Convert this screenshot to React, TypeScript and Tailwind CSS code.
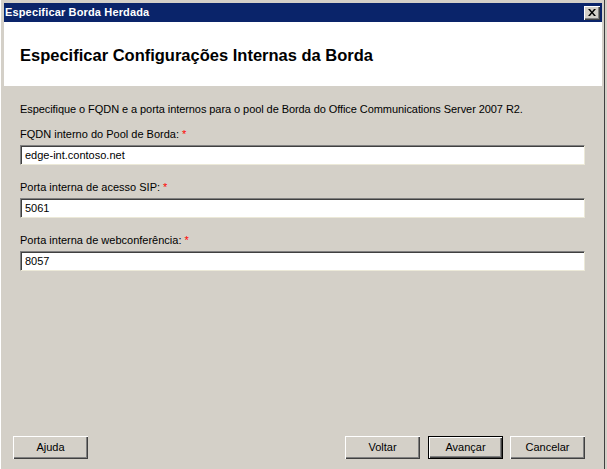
import React from "react";

const font = { fontFamily: '"Liberation Sans", Arial, sans-serif' };

function Field({ label, value }: { label: string; value: string }) {
  return (
    <div className="flex flex-col mt-[16px] first:mt-0">
      <label className="h-[13px] leading-[13px] mb-[4px]">
        {label} <span className="text-[#ff0000]">*</span>
      </label>
      <div className="h-[20px] bg-white border-t border-l border-t-[#808080] border-l-[#808080] border-b border-r border-b-[#ece9d8] border-r-[#ece9d8] shadow-[inset_1px_1px_0_#404040] flex items-center pl-[4px] leading-[13px]">
        {value}
      </div>
    </div>
  );
}

function Btn({ text, isDefault }: { text: string; isDefault?: boolean }) {
  return (
    <button
      className={`w-[75px] h-[23px] bg-[#d4d0c8] text-[11px] text-black flex items-center justify-center ${
        isDefault
          ? "border border-black shadow-[inset_1px_1px_0_#ffffff,inset_-1px_-1px_0_#404040,inset_-2px_-2px_0_#808080]"
          : "shadow-[inset_1px_1px_0_#ffffff,inset_-1px_-1px_0_#404040,inset_-2px_-2px_0_#808080]"
      }`}
    >
      {text}
    </button>
  );
}

export default function App() {
  return (
    <div
      className="w-[607px] h-[469px] bg-[#d4d0c8] text-[11px] text-black overflow-hidden"
      style={font}
    >
      <div className="w-[605px] h-[469px] pl-[3px] pr-[2px] pt-[3px] border-l border-l-white border-r border-r-[#404040] flex flex-col">
        {/* barra de titulo */}
        <div className="h-[19px] bg-[#0a246a] flex items-center justify-between pl-[1px] pr-[2px]">
          <span className="text-white font-bold text-[11px] leading-[19px] tracking-[0.15px]">
            Especificar Borda Herdada
          </span>
          <div className="w-[16px] h-[14px] bg-[#d4d0c8] shadow-[inset_1px_1px_0_#ffffff,inset_-1px_-1px_0_#404040,inset_-2px_-2px_0_#808080] flex items-center justify-center">
            <svg width="8" height="7" viewBox="0 0 8 7">
              <path d="M0 0h2l2 2.5L6 0h2L5 3.5 8 7H6L4 4.5 2 7H0l3-3.5z" fill="#000" />
            </svg>
          </div>
        </div>

        <div className="h-[64px] bg-white flex items-center pl-[16px] pt-[1px]">
          <h1 className="text-[16.5px] font-bold leading-[20px]">
            Especificar Configurações Internas da Borda
          </h1>
        </div>

        <div className="flex-1 flex flex-col pl-[16px] pr-[17px]">
          <p className="mt-[17px] h-[13px] leading-[13px] tracking-[-0.07px]">
            Especifique o FQDN e a porta internos para o pool de Borda do Office Communications Server 2007 R2.
          </p>
          <div className="mt-[12px] flex flex-col">
            <Field label="FQDN interno do Pool de Borda:" value="edge-int.contoso.net" />
            <Field label="Porta interna de acesso SIP:" value="5061" />
            <Field label="Porta interna de webconferência:" value="8057" />
          </div>

          <div className="mt-auto mb-[10px] flex items-center">
            <div className="-ml-[7px]">
              <Btn text="Ajuda" />
            </div>
            <div className="ml-auto flex gap-[7px]">
              <div className="mr-[1px]">
                <Btn text="Voltar" />
              </div>
              <Btn text="Avançar" isDefault />
              <Btn text="Cancelar" />
            </div>
          </div>
        </div>
      </div>
    </div>
  );
}
